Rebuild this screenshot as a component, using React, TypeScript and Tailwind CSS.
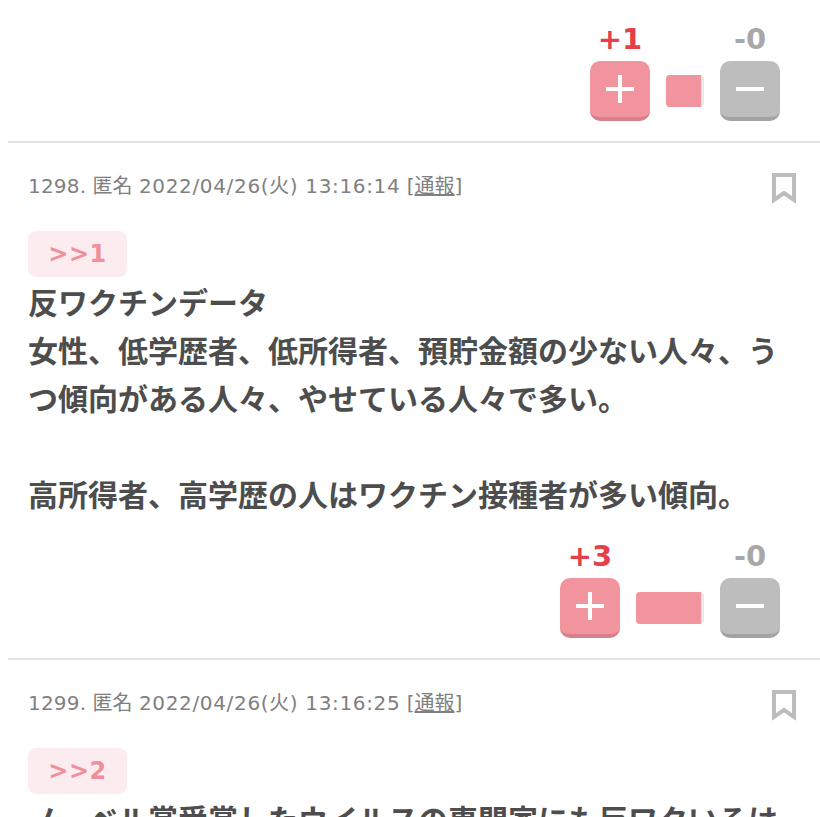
import React from 'react';

type VoteProps = {
  plus: number;
  minus: number;
  barWidth: string;
};

const Bookmark = () => (
  <svg width="24" height="31" viewBox="0 0 24 31" fill="none" className="block">
    <path d="M2 2H22V27L12 20L2 27Z" stroke="#bdbdbd" strokeWidth="4" />
  </svg>
);

function Votes({ plus, minus, barWidth }: VoteProps) {
  return (
    <div className="flex justify-end items-end pr-10">
      <div className="flex flex-col items-center w-[60px]">
        <div className="text-[29px] leading-[36px] mb-1 font-bold text-[#e5404a]">+{plus}</div>
        <div className="w-[60px] h-[60px] rounded-[10px] bg-[#f2949e] border-b-4 border-[#d97f89] flex items-center justify-center">
          <svg width="30" height="30" viewBox="0 0 30 30">
            <path d="M1 15H29M15 1V29" stroke="#fff" strokeWidth="4" />
          </svg>
        </div>
      </div>
      <div className="h-[32px] mx-4 mb-[14px] flex rounded-[4px] overflow-hidden" style={{ width: barWidth }}>
        <div className="flex-1 bg-[#f2949e]" />
        <div className="w-[3px] bg-[#e8e8e8]" />
      </div>
      <div className="flex flex-col items-center w-[60px]">
        <div className="text-[29px] leading-[36px] mb-1 font-bold text-[#a8a8a8]">-{minus}</div>
        <div className="w-[60px] h-[60px] rounded-[10px] bg-[#bdbdbd] border-b-4 border-[#a3a3a3] flex items-center justify-center">
          <svg width="30" height="30" viewBox="0 0 30 30">
            <path d="M1 15H29" stroke="#fff" strokeWidth="4" />
          </svg>
        </div>
      </div>
    </div>
  );
}

function Meta({ no, date, time }: { no: number; date: string; time: string }) {
  return (
    <div className="flex justify-between items-start pl-7 pr-6">
      <div className="text-[20px] leading-[30px] text-[#808080] mt-[28px] mb-px">
        <span className="tracking-[0.2px]">{no}.</span> 匿名{' '}
        <span className="tracking-[0.65px]">{date} {time}</span> [<span className="underline">通報</span>]
      </div>
      <div className="mt-[30px]">
        <Bookmark />
      </div>
    </div>
  );
}

function Anchor({ label }: { label: string }) {
  return (
    <div className="pl-7 mt-[27px]">
      <div className="w-[99px] h-[46px] rounded-[8px] bg-[#fdecef] flex items-center justify-center text-[24px] font-bold tracking-[0.5px] text-[#ef8f9b]">
        {label}
      </div>
    </div>
  );
}

export default function App() {
  return (
    <div
      className="h-[817px] overflow-hidden bg-white"
      style={{ fontFamily: '"DejaVu Sans", "Noto Sans CJK JP", sans-serif' }}
    >
      <div className="pt-[21px] pb-5">
        <Votes plus={1} minus={0} barWidth="38px" />
      </div>
      <div className="ml-2 border-t-2 border-[#e3e3e3]" />
      <Meta no={1298} date="2022/04/26(火)" time="13:16:14" />
      <Anchor label=">>1" />
      <div
        className="pl-7 pr-10 text-[30px] leading-[48px] font-bold text-[#4d4d4d]"
        style={{ fontFamily: '"Noto Sans CJK JP", sans-serif' }}
      >
        反ワクチンデータ
        <br />
        女性、低学歴者、低所得者、預貯金額の少ない人々、う
        <br />
        つ傾向がある人々、やせている人々で多い。
        <br />
        <br />
        高所得者、高学歴の人はワクチン接種者が多い傾向。
      </div>
      <div className="pt-[21px] pb-5">
        <Votes plus={3} minus={0} barWidth="68px" />
      </div>
      <div className="ml-2 border-t-2 border-[#e3e3e3]" />
      <Meta no={1299} date="2022/04/26(火)" time="13:16:25" />
      <Anchor label=">>2" />
      <div
        className="pl-7 pr-10 text-[30px] leading-[48px] font-bold text-[#4d4d4d] whitespace-nowrap"
        style={{ fontFamily: '"Noto Sans CJK JP", sans-serif' }}
      >
        ノーベル賞受賞したウイルスの専門家にも反ワクいるは
      </div>
    </div>
  );
}
